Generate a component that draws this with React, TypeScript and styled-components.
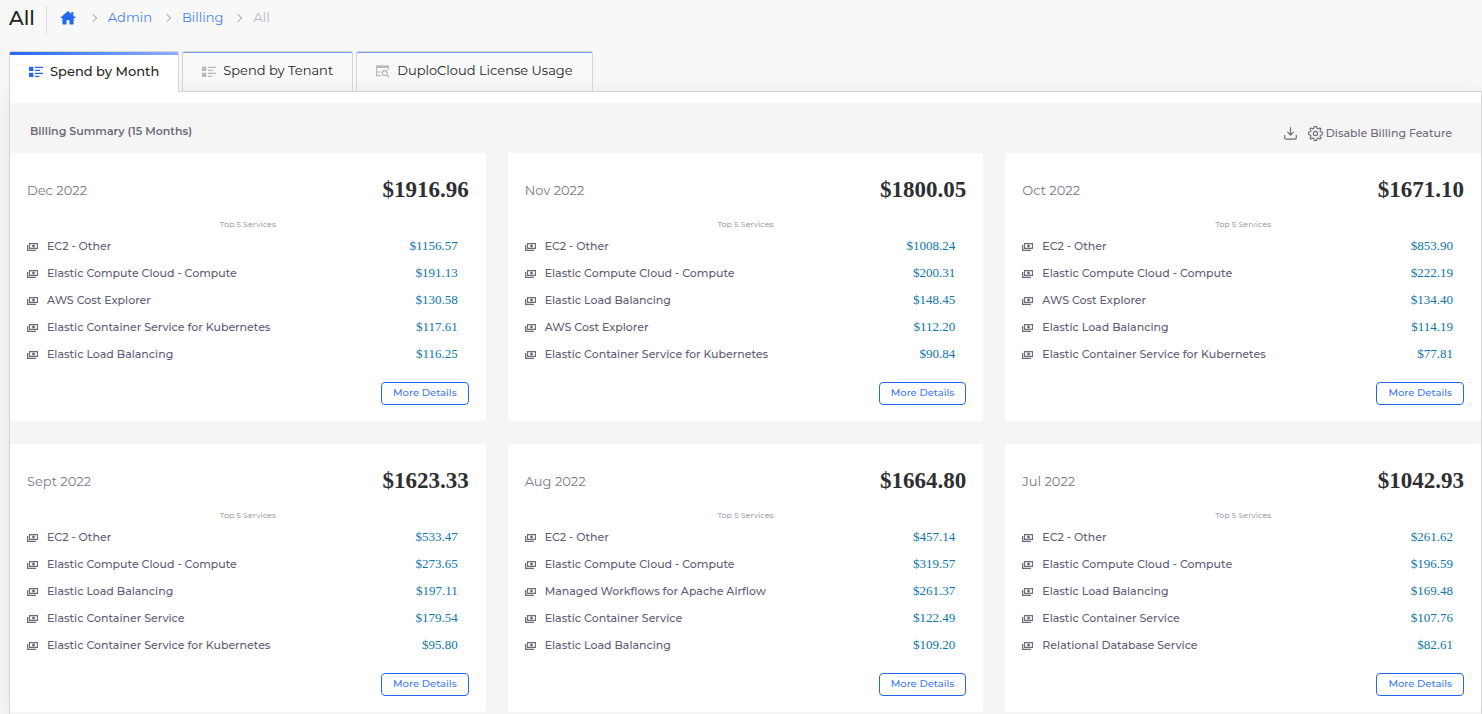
import React from "react";
import styled, { createGlobalStyle } from "styled-components";

const GlobalStyle = createGlobalStyle`
  *, *::before, *::after { box-sizing: border-box; }
  body {
    margin: 0;
    background: #f8f8f8;
    color: #6e6b7b;
    font-family: Montserrat, Inter, "Open Sans", sans-serif;
    font-size: 13px;
  }
  h1, h2, h3, p, ul, ol { margin: 0; padding: 0; }
  ul, ol { list-style: none; }
  button { font-family: inherit; cursor: pointer; }
  svg { display: block; flex: none; }
`;

const Page = styled.div`
  min-height: 100vh;
  padding-left: 9px;
  display: flex;
  flex-direction: column;
`;

const Header = styled.header`
  display: flex;
  align-items: center;
  height: 38px;
`;

const Title = styled.h1`
  padding: 0 11px 2px 0;
  color: #1e1e1e;
  font-size: 20px;
  line-height: 24px;
  font-weight: 500;
`;

const Crumbs = styled.ol`
  display: flex;
  align-items: center;
  height: 29px;
  margin-top: 2px;
  padding: 0 0 6px 13px;
  border-left: 1px solid #d6dce1;
  font-size: 13px;
  line-height: 18px;
`;

const Crumb = styled.li`
  display: flex;
  align-items: center;
  color: #b9b9c3;

  & + &::before {
    content: "";
    width: 6px;
    height: 6px;
    margin: 2px 12px 0 12px;
    border: solid #b0b0b8;
    border-width: 1px 1px 0 0;
    transform: rotate(45deg);
  }
`;

const CrumbLink = styled.a`
  color: #4583f7;
  text-decoration: none;

  svg { margin: 2px 2px 0 0; }
`;

const TabBar = styled.div`
  display: flex;
  gap: 3px;
  margin-top: 13px;
`;

const Tab = styled.button<{ $active?: boolean }>`
  position: relative;
  display: flex;
  align-items: center;
  gap: 7px;
  height: ${(p) => (p.$active ? 41 : 40)}px;
  margin-bottom: ${(p) => (p.$active ? "-1px" : "0")};
  padding: 0 19px 3px 19px;
  border: 1px solid #d5d5d5;
  border-bottom: 0;
  border-radius: 3px 3px 0 0;
  background: ${(p) => (p.$active ? "#fff" : "linear-gradient(#f9f9f9 65%, #efefef)")};
  color: #262626;
  font-size: 13px;
  line-height: 18px;
  font-weight: ${(p) => (p.$active ? 500 : 400)};
  z-index: ${(p) => (p.$active ? 1 : 0)};
  white-space: nowrap;

  &::before {
    content: "";
    position: absolute;
    inset: 0 0 auto;
    height: ${(p) => (p.$active ? 3 : 1)}px;
    background: ${(p) => (p.$active ? "linear-gradient(90deg, #2468f2, #8db0fb)" : "#79a3f8")};
  }

  svg { margin-top: 3px; color: ${(p) => (p.$active ? "#2468f2" : "#b9b9c0")}; }
`;

const Panel = styled.main`
  flex: 1;
  padding-top: 11px;
  border: 1px solid #d5d5d5;
  border-bottom: 0;
  background: linear-gradient(#fff 11px, #f5f5f5 11px);
  box-shadow: 0 4px 20px rgba(34, 41, 47, 0.1);
`;

const Summary = styled.div`
  display: flex;
  align-items: center;
  justify-content: space-between;
  height: 50px;
  padding: 7px 29px 0 20px;
`;

const SummaryTitle = styled.h2`
  padding-bottom: 2px;
  font-size: 11px;
  line-height: 18px;
  font-weight: 600;
`;

const Actions = styled.div`
  display: flex;
  align-items: center;
  gap: 11px;
  padding-top: 3px;
`;

const Action = styled.button`
  display: flex;
  align-items: center;
  gap: 3px;
  padding: 0;
  border: 0;
  background: none;
  color: #6e6b7b;
  font-size: 11px;
  line-height: 18px;
  font-weight: 500;
`;

const Cards = styled.div`
  display: grid;
  grid-template-columns: repeat(3, minmax(0, 1fr));
  gap: 23px 22px;
  padding-bottom: 2px;
`;

const Card = styled.section`
  display: flex;
  flex-direction: column;
  padding: 23px 17px 16px;
  border-radius: 3px;
  background: #fff;
`;

const CardHead = styled.div`
  display: flex;
  align-items: center;
  justify-content: space-between;
`;

const Month = styled.h3`
  color: #7b7888;
  font-size: 13px;
  line-height: 28px;
  font-weight: 400;
`;

const Total = styled.p`
  color: #2f2f33;
  font-family: "Liberation Serif", "Times New Roman", serif;
  font-size: 23px;
  line-height: 28px;
  font-weight: 700;
`;

const Caption = styled.p`
  margin: 14px 0 2px;
  color: #8b8998;
  font-size: 8px;
  line-height: 12px;
  text-align: center;
`;

const Service = styled.li`
  display: flex;
  align-items: center;
  height: 27px;
  padding-right: 11px;
  color: #625d76;
  font-size: 11px;
  line-height: 18px;
  font-weight: 500;

  svg { margin: 3px 9px 0 0; }
`;

const Price = styled.span`
  margin-left: auto;
  color: #0e76a8;
  font-family: "Liberation Serif", "Times New Roman", serif;
  font-size: 13px;
  font-weight: 400;
`;

const More = styled.button`
  align-self: flex-end;
  height: 23px;
  margin-top: 15px;
  padding: 0 11px 1px;
  border: 1px solid #2468f2;
  border-radius: 4px;
  background: #fff;
  color: #3f7af4;
  font-size: 10px;
  line-height: 16px;
  font-weight: 500;
`;

const HomeIcon = () => (
  <svg width="16" height="14" viewBox="0 0 16 14" fill="#2468f2" aria-hidden="true">
    <path d="M8 0 0 7h2.4v6.6h4.1V9.2h3v4.4h4.1V7H16l-2.7-2.4V1h-2v1.9Z" />
  </svg>
);

const ListIcon = () => (
  <svg width="14" height="12" viewBox="0 0 14 12" fill="currentColor" aria-hidden="true">
    <path d="M0 .8h4.4v4.2H0zM0 6.8h4.4V11H0zM6 .7h8V2H6zM6 3.7h5V5H6zM6 6.7h8V8H6zM6 9.7h4.4V11H6z" />
  </svg>
);

const UsageIcon = () => (
  <svg width="14" height="13" viewBox="0 0 14 13" fill="none" stroke="currentColor" aria-hidden="true">
    <path d="M.6 11V1h11.8v4M5 10.6H.6M.6 7H5" strokeWidth="1.2" />
    <path d="M.5 1.8h12" strokeWidth="2.4" />
    <circle cx="8.8" cy="8" r="2.5" strokeWidth="1.3" />
    <path d="m10.6 9.8 2.4 2.4" strokeWidth="1.4" />
  </svg>
);

const CashIcon = () => (
  <svg width="11" height="8" viewBox="0 0 11 8" fill="none" stroke="#6e6b7b" aria-hidden="true">
    <path d="M2.5.6h8v4.8h-8z" strokeWidth="1.2" />
    <path d="M.6 2v5.3H9" strokeWidth="1.3" />
    <path d="M6.5 1.5v3M5 3h3" strokeWidth="1.4" />
  </svg>
);

const DownloadIcon = () => (
  <svg width="13" height="13" viewBox="0 0 13 13" fill="none" stroke="#6e6b7b" strokeWidth="1.2" strokeLinecap="round" strokeLinejoin="round" aria-hidden="true">
    <path d="M6.5.7v7.2M3.7 5.2l2.8 2.8 2.8-2.8M.7 8.3v2.5c0 .9.5 1.4 1.4 1.4h8.8c.9 0 1.4-.5 1.4-1.4V8.3" />
  </svg>
);

const GearIcon = () => (
  <svg width="15" height="15" viewBox="0 0 24 24" fill="none" stroke="#6e6b7b" strokeWidth="1.8" strokeLinejoin="round" aria-hidden="true">
    <path d="m10 1-.7 3.1-1.7.7L4.9 3.1 3.1 4.9l1.7 2.7-.7 1.7L1 10v4l3.1.7.7 1.7-1.7 2.7 1.8 1.8 2.7-1.7 1.7.7L10 23h4l.7-3.1 1.7-.7 2.7 1.7 1.8-1.8-1.7-2.7.7-1.7L23 14v-4l-3.1-.7-.7-1.7 1.7-2.7-1.8-1.8-2.7 1.7-1.7-.7L14 1Z" />
    <circle cx="12" cy="12" r="3.4" />
  </svg>
);

const EC2 = "EC2 - Other";
const COMPUTE = "Elastic Compute Cloud - Compute";
const EXPLORER = "AWS Cost Explorer";
const EKS = "Elastic Container Service for Kubernetes";
const ECS = "Elastic Container Service";
const ELB = "Elastic Load Balancing";

type MonthBill = { month: string; total: string; services: [string, string][] };

const bills: MonthBill[] = [
  { month: "Dec 2022", total: "$1916.96", services: [[EC2, "$1156.57"], [COMPUTE, "$191.13"], [EXPLORER, "$130.58"], [EKS, "$117.61"], [ELB, "$116.25"]] },
  { month: "Nov 2022", total: "$1800.05", services: [[EC2, "$1008.24"], [COMPUTE, "$200.31"], [ELB, "$148.45"], [EXPLORER, "$112.20"], [EKS, "$90.84"]] },
  { month: "Oct 2022", total: "$1671.10", services: [[EC2, "$853.90"], [COMPUTE, "$222.19"], [EXPLORER, "$134.40"], [ELB, "$114.19"], [EKS, "$77.81"]] },
  { month: "Sept 2022", total: "$1623.33", services: [[EC2, "$533.47"], [COMPUTE, "$273.65"], [ELB, "$197.11"], [ECS, "$179.54"], [EKS, "$95.80"]] },
  { month: "Aug 2022", total: "$1664.80", services: [[EC2, "$457.14"], [COMPUTE, "$319.57"], ["Managed Workflows for Apache Airflow", "$261.37"], [ECS, "$122.49"], [ELB, "$109.20"]] },
  { month: "Jul 2022", total: "$1042.93", services: [[EC2, "$261.62"], [COMPUTE, "$196.59"], [ELB, "$169.48"], [ECS, "$107.76"], ["Relational Database Service", "$82.61"]] },
];

export default function App() {
  return (
    <Page>
      <GlobalStyle />
      <Header>
        <Title>All</Title>
        <nav aria-label="Breadcrumb">
          <Crumbs>
            <Crumb><CrumbLink href="#home" aria-label="Home"><HomeIcon /></CrumbLink></Crumb>
            <Crumb><CrumbLink href="#admin">Admin</CrumbLink></Crumb>
            <Crumb><CrumbLink href="#billing">Billing</CrumbLink></Crumb>
            <Crumb aria-current="page">All</Crumb>
          </Crumbs>
        </nav>
      </Header>
      <TabBar role="tablist">
        <Tab role="tab" aria-selected $active><ListIcon />Spend by Month</Tab>
        <Tab role="tab" aria-selected={false}><ListIcon />Spend by Tenant</Tab>
        <Tab role="tab" aria-selected={false}><UsageIcon />DuploCloud License Usage</Tab>
      </TabBar>
      <Panel>
        <Summary>
          <SummaryTitle>Billing Summary (15 Months)</SummaryTitle>
          <Actions>
            <Action aria-label="Download"><DownloadIcon /></Action>
            <Action><GearIcon />Disable Billing Feature</Action>
          </Actions>
        </Summary>
        <Cards>
          {bills.map((bill) => (
            <Card key={bill.month}>
              <CardHead>
                <Month>{bill.month}</Month>
                <Total>{bill.total}</Total>
              </CardHead>
              <Caption>Top 5 Services</Caption>
              <ul>
                {bill.services.map(([name, price]) => (
                  <Service key={name}><CashIcon />{name}<Price>{price}</Price></Service>
                ))}
              </ul>
              <More>More Details</More>
            </Card>
          ))}
        </Cards>
      </Panel>
    </Page>
  );
}
